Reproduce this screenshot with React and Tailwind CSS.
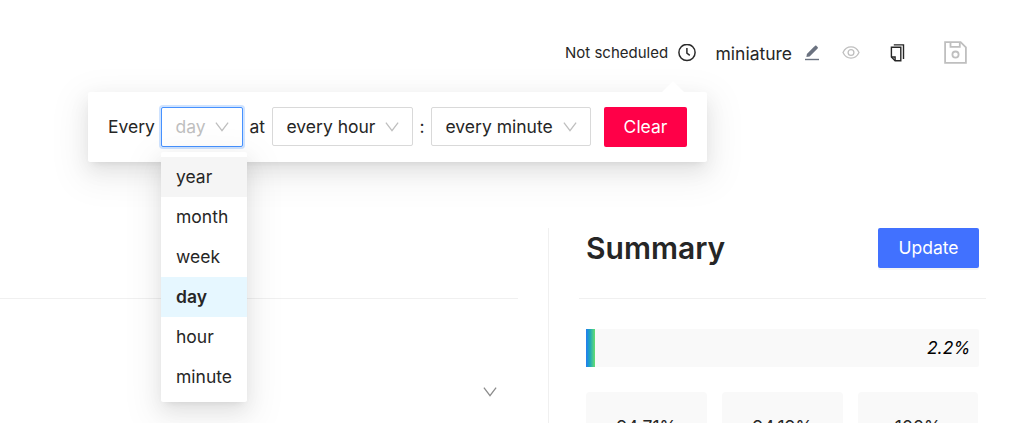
import React from 'react';

const Chevron = ({ className }) => (
  <svg className={className} width="14" height="14" viewBox="0 0 14 14" fill="none" stroke="currentColor" strokeWidth="1.300">
    <path d="M.9 2.700 7 10.700l6.100-8" />
  </svg>
);

const ClockIcon = () => (
  <svg width="18" height="18" viewBox="0 0 18 18" fill="none" stroke="#2b2b2b" strokeWidth="1.5">
    <circle cx="9" cy="8.500" r="8.100" />
    <path d="M8.900 3.900v5.300l2.900 2.100" />
  </svg>
);

const EditIcon = () => (
  <svg width="16" height="16" viewBox="0 0 16 16" fill="#6b7280">
    <path d="M1 13.800h14v1.400H1z" />
    <path d="M2.400 11.900l.5-3L10 1.800l1-.9c.5-.5 1-.5 1.500 0l1.100 1.100c.5.500.5 1 0 1.500L5.600 11.400z" />
  </svg>
);

const EyeIcon = () => (
  <svg width="18" height="14" viewBox="0 0 18 14" fill="none" stroke="#bfbfbf" strokeWidth="1.300">
    <path d="M1 6.500C2.700 2.900 5.300.9 9 .9s6.300 2 8 5.600c-1.700 3.600-4.300 5.600-8 5.600s-6.300-2-8-5.600z" />
    <circle cx="9" cy="6.500" r="2.900" />
  </svg>
);

const CopyIcon = () => (
  <svg width="15" height="18" viewBox="0 0 15 18" fill="none" stroke="#262626" strokeWidth="1.400">
    <path d="M3.800.9h9.700v14.200" />
    <path d="M1.400 3.200h9.400v13.500H5.100l-3.700-3.700z" />
    <path d="M1.400 13h3.700v3.700" />
  </svg>
);

const SaveIcon = () => (
  <svg width="24" height="24" viewBox="0 0 24 24" fill="none" stroke="#bfbfbf" strokeWidth="1.800">
    <path d="M1.100 1.100h15.500l5.300 5.300v15.500H1.100z" />
    <path d="M6.500 1.100v4.700h9.300V1.100" />
    <circle cx="11.500" cy="13.600" r="3.100" />
  </svg>
);

const Select = ({ value, className }) => (
  <div className={`flex h-[39px] shrink-0 items-center rounded-[2px] border border-[#d9d9d9] bg-white pl-[13.5px] text-[#262626] ${className}`}>
    <span>{value}</span>
    <Chevron className="mr-[13px] ml-auto text-[#bfbfbf]" />
  </div>
);

const units = ['year', 'month', 'week', 'day', 'hour', 'minute'];

const unitClass = (unit) => {
  if (unit === 'year') return 'bg-[#f5f5f5]';
  if (unit === 'day') return 'bg-[#e6f7ff] font-semibold';
  return 'bg-white';
};

const UnitMenu = () => (
  <ul className="absolute top-[60px] left-[73px] h-[250px] w-[86px] rounded-[2px] bg-white py-[5px] shadow-[0_4px_8px_-5px_rgba(0,0,0,0.12),0_8px_20px_0_rgba(0,0,0,0.08),0_11px_35px_10px_rgba(0,0,0,0.05)]">
    {units.map((unit) => (
      <li key={unit} className={`flex h-10 items-center pl-[15px] ${unitClass(unit)}`}>{unit}</li>
    ))}
  </ul>
);

const SchedulePopover = () => (
  <div className="absolute top-[92px] left-[88px] z-10 h-[70px] w-[619px] rounded-[2px] bg-white shadow-[0_4px_8px_-5px_rgba(0,0,0,0.12),0_8px_20px_0_rgba(0,0,0,0.08),0_11px_35px_10px_rgba(0,0,0,0.05)]">
    <svg className="absolute -top-[11px] left-[573px]" width="24" height="12" viewBox="0 0 24 12">
      <path d="M0 12 10.800 1.200q1.200-1.200 2.400 0L24 12z" fill="white" />
    </svg>
    <div className="flex h-[69px] items-center pl-5">
      <span className="w-[53px] shrink-0">Every</span>
      <div className="flex h-10 w-[82px] shrink-0 items-center rounded-[2px] border border-[#4792ff] bg-white pl-[13.5px] text-[#bfbfbf] shadow-[0_0_0_2px_rgba(64,144,255,0.25)]">
        <span>day</span>
        <Chevron className="mr-[13.500px] ml-auto" />
      </div>
      <span className="ml-[6.5px] w-[22.5px] shrink-0">at</span>
      <Select value="every hour" className="w-[141px]" />
      <span className="ml-[6.5px] w-[11.5px] shrink-0">:</span>
      <Select value="every minute" className="w-[160px]" />
      <button className="ml-[13px] h-10 w-[83px] rounded-[2px] bg-[#ff0048] text-white">Clear</button>
    </div>
    <UnitMenu />
  </div>
);

const metrics = ['94.71%', '94.19%', '100%'];

export default function App() {
  return (
    <div className="relative flex h-[423px] w-[1036px] flex-col overflow-hidden bg-white font-['Inter',sans-serif] text-[17.5px] leading-none whitespace-nowrap text-[#262626]">
      <header className="flex h-[105px] shrink-0 items-center pl-[565px]">
        <span className="w-[113px] shrink-0 text-[15px]">Not scheduled</span>
        <ClockIcon />
        <span className="ml-[19.5px] w-[88.5px] shrink-0 pt-0.5">miniature</span>
        <EditIcon />
        <div className="ml-[21.5px]"><EyeIcon /></div>
        <div className="ml-[30.5px]"><CopyIcon /></div>
        <div className="ml-[39px]"><SaveIcon /></div>
      </header>
      <SchedulePopover />
      <main className="mt-[123px] flex h-[195px] shrink-0">
        <section className="flex w-[518px] shrink-0 flex-col">
          <div className="h-[71px] shrink-0 border-b border-[#f0f0f0]" />
          <Chevron className="mt-[86px] mr-[21px] ml-auto text-[#8c8c8c]" />
        </section>
        <aside className="ml-[30px] flex w-[438px] flex-col border-l border-[#f0f0f0] pl-[30px]">
          <div className="flex h-[71px] shrink-0 justify-between border-b border-[#f0f0f0] pr-[7px] pl-[7px]">
            <h1 className="pt-[3px] text-[30px] leading-[34px] font-semibold">Summary</h1>
            <button className="h-10 w-[101px] rounded-[2px] bg-[#4171ff] text-white shadow-[0_2px_0_rgba(0,0,0,0.04)]">Update</button>
          </div>
          <div className="mt-[30px] ml-[7px] flex h-[38px] w-[393px] shrink-0 items-center justify-between rounded-r-[2px] bg-[#f9f9f9] pr-[8.5px] text-black">
            <div className="h-full w-[9px] bg-linear-to-r from-[#277af2] via-[#25adb1] to-[#65df68]" />
            <em>2.2%</em>
          </div>
          <div className="mt-[25px] ml-[7px] grid w-[393px] grid-cols-[121px_121px_120px] gap-[15px]">
            {metrics.map((metric) => (
              <div key={metric} className="h-20 rounded-[4px] bg-[#f9f9f9] pt-[26px] text-center">{metric}</div>
            ))}
          </div>
        </aside>
      </main>
    </div>
  );
}
